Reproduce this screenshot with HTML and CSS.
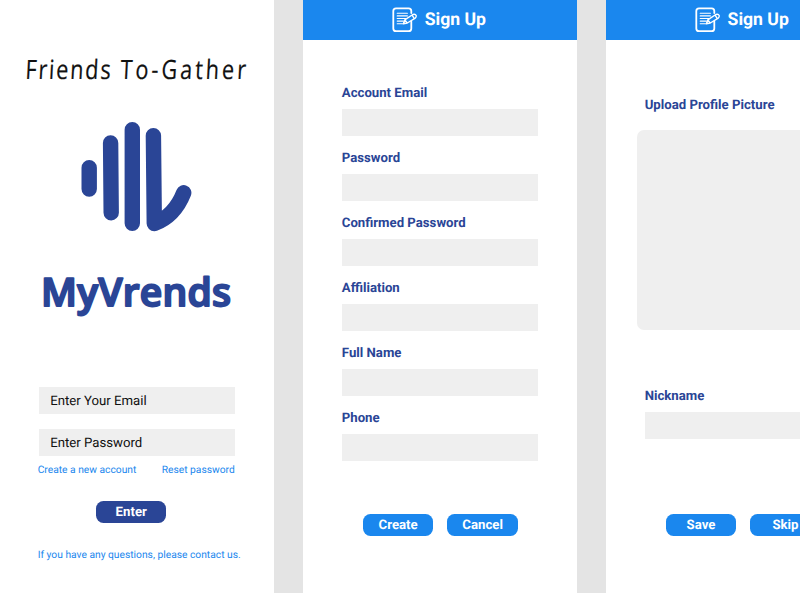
FILE: index.html
```html
<!DOCTYPE html>
<html lang="en">
<head>
<meta charset="utf-8">
<title>MyVrends</title>
<link rel="stylesheet" href="styles.css">
</head>
<body>
<svg class="defs" aria-hidden="true">
  <symbol id="note" viewBox="0 0 26 26">
    <g fill="none" stroke="#fff" stroke-linecap="round" stroke-linejoin="round">
      <path stroke-width="1.8" d="M19.3 6V4Q19.3 1.3 16.6 1.3H4Q1.3 1.3 1.3 4V21.4Q1.3 24.1 4 24.1H16.6Q19.3 24.1 19.3 21.4V14.5"/>
      <path stroke-width="1.1" d="M5.2 6.3H15.4M5.2 8.9H15.4M5.2 11.5H14M5.2 14.1H11.5M5.2 16.7H10.5"/>
      <path stroke-width="1.4" d="M11.4 16.8L12.8 12.9L20.8 7.5Q23.3 6.6 24.2 8.5Q24.5 10 23.3 11.1L15.3 16ZM20 8.2L22.4 11.6M12.8 13L15.2 16"/>
    </g>
  </symbol>
</svg>
<main class="board">
  <section class="screen login">
    <svg class="tagline" viewBox="0 0 274 50"><g transform="translate(25 35.5) skewX(-3) scale(.82 1)"><text x="0" y="0" textLength="104">Friends</text><text x="116" y="0" textLength="153">To-Gather</text></g></svg>
    <svg class="logo" viewBox="81 121 112 112">
      <path d="M89.2 167.7V189M110.6 143L111.2 212.7M132.3 129.7V223.3M153.4 135.7L154.3 223.5Q174.5 216 183.7 192.8"/>
    </svg>
    <svg class="brand" viewBox="0 0 274 64"><text x="41" y="40" textLength="190">MyVrends</text></svg>
    <form class="login-form">
      <div class="field">Enter Your Email</div>
      <div class="field">Enter Password</div>
      <div class="links"><a>Create a new account</a><a>Reset password</a></div>
      <div class="btn navy">Enter</div>
      <a class="contact">If you have any questions, please contact us.</a>
    </form>
  </section>
  <section class="screen">
    <header class="bar"><svg class="note"><use href="#note"/></svg><h1>Sign Up</h1></header>
    <form class="details">
      <label>Account Email</label><div class="field"></div>
      <label>Password</label><div class="field"></div>
      <label>Confirmed Password</label><div class="field"></div>
      <label>Affiliation</label><div class="field"></div>
      <label>Full Name</label><div class="field"></div>
      <label>Phone</label><div class="field"></div>
    </form>
    <div class="actions"><div class="btn create">Create</div><div class="btn">Cancel</div></div>
  </section>
  <section class="screen">
    <header class="bar"><svg class="note"><use href="#note"/></svg><h1>Sign Up</h1></header>
    <form class="profile">
      <label>Upload Profile Picture</label><div class="picture"></div>
      <label>Nickname</label><div class="field"></div>
    </form>
    <div class="actions"><div class="btn">Save</div><div class="btn">Skip</div></div>
  </section>
</main>
</body>
</html>
```
FILE: styles.css
```css
* { box-sizing: border-box; }
body { margin: 0; overflow: hidden; background: #e4e4e4; font-family: Roboto, sans-serif; text-rendering: geometricPrecision; }
.defs { display: none; }
.board { display: flex; gap: 29.2px; width: 800px; height: 593px; overflow: hidden; }
.screen { flex: 0 0 273.7px; height: 593px; background: #fff; display: flex; flex-direction: column; }

.tagline { width: 274px; height: 50px; margin-top: 43px; }
.tagline text { font: 400 26.5px "Open Sans", sans-serif; fill: #111; stroke: #111; stroke-width: .2; }
.logo { width: 112px; height: 112px; margin: 28px 0 0 81px; }
.logo path { fill: none; stroke: #2a4596; stroke-width: 15.4; stroke-linecap: round; stroke-linejoin: round; }
.brand { width: 274px; height: 64px; margin-top: 33px; overflow: visible; }
.brand text { font: 600 39px "Open Sans", sans-serif; fill: #2a4596; stroke: #2a4596; stroke-width: 2; stroke-linejoin: round; }

.field { height: 27px; background: #efefef; }
.login-form { margin: 57px 0 0 38.7px; width: 196.5px; display: flex; flex-direction: column; }
.login-form .field { margin-bottom: 15px; padding-left: 11.5px; font-size: 13.2px; line-height: 29px; color: #111; }
.login-form .field + .field { margin-bottom: 6px; }
.links { display: flex; justify-content: space-between; height: 15px; margin: 0 .5px 0 -1px; }
.links a, .contact { font-size: 10.25px; line-height: 16px; color: #1a87ee; white-space: nowrap; }
.btn { width: 70.5px; height: 22px; border-radius: 7.5px; background: #1a87ee; color: #fff; font-size: 13.2px; font-weight: 700; line-height: 23px; text-align: center; }
.btn.navy { background: #2a4596; margin: 24px 0 0 57.3px; }
.contact { margin: 24px 0 0 -1px; }

.bar { height: 39.5px; display: flex; align-items: center; background: #1a87ee; color: #fff; padding-left: 89px; }
.note { width: 26px; height: 26px; }
.bar h1 { margin: 0 0 0 6.5px; padding-top: 1px; font-size: 17.6px; font-weight: 700; line-height: 26px; }
label { display: block; height: 18px; font-size: 13.2px; font-weight: 700; line-height: 20px; color: #2a4596; }
.details { height: 474px; padding: 44.5px 0 0 38.6px; }
.details .field { width: 196.5px; margin: 7px 0 13px; }
.actions { display: flex; gap: 14px; padding-left: 59.7px; }
.profile { height: 474px; padding: 56.5px 0 0 38.6px; }
.picture { width: 212px; height: 200px; margin: 16px 0 57px -8px; border-radius: 7px; background: #efefef; }
.profile .field { width: 196.5px; margin-top: 7px; }
```
